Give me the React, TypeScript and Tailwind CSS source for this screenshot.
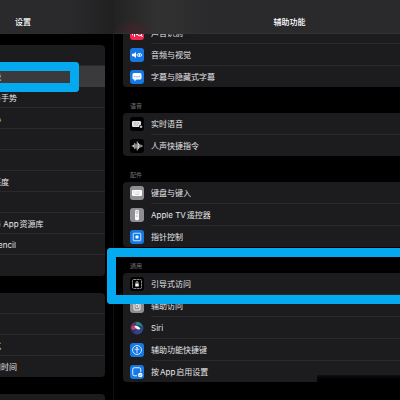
import type { ReactNode } from 'react';

type Item = {
  label: string;
  icon: ReactNode;
  tile: string;
};

type Group = {
  caption?: string;
  marked?: boolean;
  items: Item[];
};

const FONT = "font-['Inter','Noto_Sans_CJK_SC',sans-serif]";

const svgProps = {
  viewBox: '0 0 28 28',
  className: 'size-[14px]',
  fill: 'none',
  'aria-hidden': true,
} as const;

const SoundIcon = () => (
  <svg {...svgProps} stroke="#fff" strokeWidth="2">
    <path d="M5 10v8M9 7v14M13 11v6" strokeLinecap="round" />
    <circle cx="19" cy="15" r="4.5" />
    <path d="M22 18l3 4" />
  </svg>
);

const AudioVisualIcon = () => (
  <svg {...svgProps}>
    <path d="M4 11.5h3.500L12 8v12l-4.500-3.500H4z" fill="#fff" />
    <path d="M13.500 14c2.500-4 8-4 10.500 0-2.500 4-8 4-10.500 0z" stroke="#fff" strokeWidth="2" />
    <circle cx="18.800" cy="14" r="1.800" fill="#fff" />
  </svg>
);

const CaptionsIcon = () => (
  <svg {...svgProps}>
    <path d="M8 6h12a3 3 0 013 3v7a3 3 0 01-3 3h-7l-4 4v-4H8a3 3 0 01-3-3V9a3 3 0 013-3z" fill="#fff" />
    <path d="M8 13.500h3M12.500 13.500h3M17 13.500h3" stroke="#5f9fe8" strokeWidth="2" />
  </svg>
);

const LiveSpeechIcon = () => (
  <svg {...svgProps}>
    <rect x="4" y="8" width="18" height="12" rx="2.500" fill="#e4e4e6" />
    <path d="M7 12h12M8 16h8" stroke="#8c8c90" strokeWidth="1.500" strokeDasharray="2 1" />
    <circle cx="22" cy="19.500" r="4" fill="#000" />
    <circle cx="22" cy="19.500" r="2.600" fill="#b5b5b8" />
  </svg>
);

const WaveIcon = () => (
  <svg {...svgProps} stroke="#fff" strokeWidth="1.600" strokeLinecap="round">
    <path d="M4.500 13.500v1M7 12.500v3M9.500 9v10M12 11v7M14.500 6v16M17 9v10M19.500 11v6M22 12.500v3M24 13.500v1" />
  </svg>
);

const KeyboardIcon = () => (
  <svg {...svgProps}>
    <rect x="4" y="8" width="20" height="12" rx="2.500" fill="#fff" />
    <path d="M6.500 11.500h15M6.500 14h15" stroke="#a5a5aa" strokeWidth="1" strokeDasharray="1.500 1" />
    <path d="M9.500 17h9" stroke="#a5a5aa" strokeWidth="1" />
  </svg>
);

const RemoteIcon = () => (
  <svg {...svgProps}>
    <rect x="10" y="3.500" width="8" height="21" rx="3" fill="#fff" />
    <circle cx="14" cy="8.500" r="2.400" stroke="#8e8e93" strokeWidth="1.200" />
    <path d="M12.500 13.500v5M15.500 13.500v5" stroke="#8e8e93" strokeWidth="1.300" strokeDasharray="1.500 1" />
  </svg>
);

const PointerIcon = () => (
  <svg {...svgProps}>
    <rect x="6.500" y="6.500" width="15" height="15" rx="1.500" stroke="#fff" strokeWidth="1.600" />
    <rect x="11" y="11" width="6" height="6" rx="1.500" fill="#fff" />
  </svg>
);

const GuidedIcon = () => (
  <svg {...svgProps}>
    <rect x="5" y="5" width="18" height="18" rx="2" stroke="#d8d8d8" strokeWidth="1.300" strokeDasharray="5 1" />
    <rect x="10.500" y="13" width="7" height="6" rx="1" fill="#fff" />
    <path d="M12 13v-1.800a2 2 0 014 0V13" stroke="#fff" strokeWidth="1.500" />
  </svg>
);

const AssistiveIcon = () => (
  <svg {...svgProps}>
    <rect x="8" y="5" width="12" height="17" rx="2" stroke="#fff" strokeWidth="1.800" />
    <path d="M12 17v-6h5v5.500h-3z" stroke="#fff" strokeWidth="1.500" />
  </svg>
);

const SiriIcon = () => (
  <svg {...svgProps}>
    <defs>
      <linearGradient id="siriRing" x1="0" y1="0" x2="1" y2="1">
        <stop offset="0" stopColor="#8a3a7c" />
        <stop offset="0.450" stopColor="#27305e" />
        <stop offset="1" stopColor="#2b5f9e" />
      </linearGradient>
    </defs>
    <circle cx="14" cy="14" r="13" fill="url(#siriRing)" />
    <path d="M14 2c7 0 11 5 11 11-3-3-7-5-11-4-3-2-3-5 0-7z" fill="#1c8f76" />
    <path d="M3 12c4-4 9-4 12 1-4 4-8 6-11 4-1-1-1-3-1-5z" fill="#c93f74" />
    <path d="M7 21c4-1 6-3 8-6 4 1 7 3 9 5-4 6-12 7-17 1z" fill="#33428f" />
    <path d="M9 10c5-2 10 1 12 6-5 2-10 0-12-6z" fill="#f3f6fa" />
  </svg>
);

const ShortcutIcon = () => (
  <svg {...svgProps} stroke="#fff" strokeWidth="1.600">
    <circle cx="14" cy="14" r="9" />
    <circle cx="14" cy="9.500" r="1" fill="#fff" />
    <path d="M10 12.500h8M14 12.500v7" strokeLinecap="round" />
  </svg>
);

const PerAppIcon = () => (
  <svg {...svgProps}>
    <path d="M14 21.500H8.500a3 3 0 01-3-3v-10a3 3 0 013-3h10a3 3 0 013 3V14" stroke="#fff" strokeWidth="1.800" />
    <circle cx="20.500" cy="20" r="4.500" fill="#fff" />
    <path d="M18.500 20l1.500 1.500 2.500-3" stroke="#1678e5" strokeWidth="1.300" />
  </svg>
);

const groups: Group[] = [
  {
    items: [
      { label: '声音识别', icon: <SoundIcon />, tile: 'bg-[#f0284f]' },
      { label: '音频与视觉', icon: <AudioVisualIcon />, tile: 'bg-[#1678e5]' },
      { label: '字幕与隐藏式字幕', icon: <CaptionsIcon />, tile: 'bg-[#1678e5]' },
    ],
  },
  {
    caption: '语音',
    items: [
      { label: '实时语音', icon: <LiveSpeechIcon />, tile: 'bg-black' },
      { label: '人声快捷指令', icon: <WaveIcon />, tile: 'bg-black' },
    ],
  },
  {
    caption: '配件',
    items: [
      { label: '键盘与键入', icon: <KeyboardIcon />, tile: 'bg-[#8e8e93]' },
      { label: 'Apple TV遥控器', icon: <RemoteIcon />, tile: 'bg-[#8e8e93]' },
      { label: '指针控制', icon: <PointerIcon />, tile: 'bg-[#1678e5]' },
    ],
  },
  {
    caption: '通用',
    marked: true,
    items: [
      { label: '引导式访问', icon: <GuidedIcon />, tile: 'bg-black' },
      { label: '辅助访问', icon: <AssistiveIcon />, tile: 'bg-[#8e8e93]' },
      { label: 'Siri', icon: <SiriIcon />, tile: 'bg-transparent' },
      { label: '辅助功能快捷键', icon: <ShortcutIcon />, tile: 'bg-[#1678e5]' },
      { label: '按App启用设置', icon: <PerAppIcon />, tile: 'bg-[#1678e5]' },
    ],
  },
];

const sidebarTop = ['', '能', '与手势', '心', '', '', '亮度', '', '与 App资源库', 'Pencil', ''];
const sidebarBottom = ['', '', '式', '用时间'];

function SidebarCard({ rows, selected }: { rows: string[]; selected?: number }) {
  return (
    <ul className="rounded-r-[4px] bg-[#1c1c1e]">
      {rows.map((label, i) => (
        <li
          key={i}
          className={
            i === selected
              ? 'relative h-[21px] bg-[#3a3a3c]'
              : 'relative h-[21px] border-b border-[#29292b] last:border-b-0'
          }
        >
          {label && (
            <button type="button" className="-ml-[7px] flex h-[21px] w-full items-center whitespace-nowrap text-left">
              {label}
            </button>
          )}
          {i === selected && (
            <span className="pointer-events-none absolute -top-[4px] left-0 h-[30px] w-[79px] rounded-r-[4px] border-y-[9px] border-r-[9px] border-[#05a9f0]" />
          )}
        </li>
      ))}
    </ul>
  );
}

function SettingsGroup({ group }: { group: Group }) {
  return (
    <section className="relative pl-[9px]">
      {group.caption && (
        <h2 className="flex h-[26px] items-end pb-[3px] pl-[7px] text-[6px] leading-[8px] text-[#77777b]">
          {group.caption}
        </h2>
      )}
      <ul className="rounded-l-[4px] bg-[#1c1c1e]">
        {group.items.map((item, i) => (
          <li key={item.label}>
            {i > 0 && <div className="ml-[28px] h-px bg-[#29292b]" />}
            <button type="button" className="flex h-[21px] w-full items-center gap-[7px] pl-[7px] text-left">
              <span className={`size-[14px] shrink-0 overflow-hidden rounded-[3px] ${item.tile}`}>{item.icon}</span>
              <span className="whitespace-nowrap">{item.label}</span>
            </button>
          </li>
        ))}
      </ul>
      {group.marked && (
        <>
          <span className="pointer-events-none absolute top-[1px] right-0 -left-[7px] h-[56px] rounded-l-[4px] border-y-[9px] border-l-[9px] border-[#05a9f0]" />
          <span className="pointer-events-none absolute right-0 bottom-0 left-[203px] h-[7px] bg-linear-to-b from-[#121213] to-black" />
        </>
      )}
    </section>
  );
}

export default function App() {
  return (
    <div
      className={`flex h-screen overflow-hidden bg-black text-[8px] leading-[12px] text-[#e6e6e8] [text-autospace:normal] ${FONT}`}
    >
      <aside className="w-[114px] shrink-0 border-r border-[#111112]">
        <header className="-mr-px h-[34px] bg-linear-to-r from-[#2a2a2c] from-60% to-[#202021] pt-[16px] pl-[15px]">
          <h1 className="font-medium text-white">设置</h1>
        </header>
        <nav className="flex flex-col gap-[17px] pt-[11px] pr-[8px]">
          <SidebarCard rows={sidebarTop} selected={1} />
          <SidebarCard rows={sidebarBottom} />
          <SidebarCard rows={['']} />
        </nav>
      </aside>

      <main className="min-w-0 flex-1">
        <header className="relative z-10 h-[34px] border-b border-[#303032] bg-linear-to-r from-[#222223] via-[#313132] via-15% to-[#2a2a2c] to-35% pt-[16px]">
          {/* the red icon showing through the translucent bar */}
          <span className="absolute bottom-0 left-0 h-[14px] w-[40px] bg-radial-[at_50%_100%] from-[#44242b] to-transparent to-70%" />
          <h1 className="pl-[65px] text-center font-medium text-white">辅助功能</h1>
        </header>
        <div className="-mt-[12px]">
          {groups.map((group, i) => (
            <SettingsGroup key={i} group={group} />
          ))}
        </div>
      </main>
    </div>
  );
}
